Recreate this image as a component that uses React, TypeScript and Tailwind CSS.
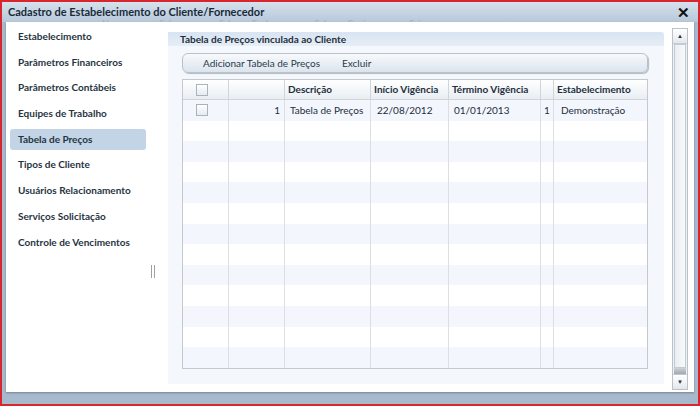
import { useState } from "react";

const NAV = [
  "Estabelecimento",
  "Parâmetros Financeiros",
  "Parâmetros Contábeis",
  "Equipes de Trabalho",
  "Tabela de Preços",
  "Tipos de Cliente",
  "Usuários Relacionamento",
  "Serviços Solicitação",
  "Controle de Vencimentos",
];

const GHOST = ["Novo", "Salvar", "Salvar e Fechar", "Salvar e Copiar", "Sair"];

const ROWS = 13;

const COLS = "grid grid-cols-[46px_56px_86px_78px_92px_13px_1fr]";

function Check() {
  return <span className="block w-[12px] h-[12px] border border-[#a9b3bd] bg-gradient-to-b from-white to-[#e6ebf0]" />;
}

export default function App() {
  const [active, setActive] = useState("Tabela de Preços");

  return (
    <div
      className="w-[700px] h-[406px] border-2 border-[#d8262e] bg-[#a7b9cd] flex flex-col overflow-hidden text-[#1d2f3d]"
      style={{ fontFamily: 'Lato, "Open Sans", sans-serif' }}
    >
      {/* title bar */}
      <div className="relative h-[20px] shrink-0 flex items-center pl-[6px] pr-[8px] bg-gradient-to-b from-[#d6e1ec] to-[#b7c8da]">
        <span className="text-[11px] font-bold text-[#1a2a38]">
          Cadastro de Estabelecimento do Cliente/Fornecedor
        </span>
        <span className="ml-auto text-[15px] font-bold leading-none text-[#111]">✕</span>
        <div className="absolute left-[100px] top-[17px] h-[3px] overflow-hidden flex gap-[36px] text-[9px] leading-[9px] text-[#8ea0b3] opacity-60">
          {GHOST.map((g) => <span key={g}>{g}</span>)}
        </div>
      </div>

      <div className="flex-1 flex px-[4px] pb-[12px]">
        <div className="relative flex-1 bg-white flex pt-[4px] shadow-[0_1px_2px_rgba(0,0,0,0.3)]">
          {/* left nav */}
          <div className="w-[140px] shrink-0 flex flex-col pl-[4px]">
            {NAV.map((n) => (
              <button
                key={n}
                onClick={() => setActive(n)}
                className={`h-[21px] mb-[4.7px] rounded-[3px] text-left pl-[8px] text-[10px] font-bold text-[#1f3442] ${
                  active === n ? "bg-[#c2d4e6]" : ""
                }`}
              >
                {n}
              </button>
            ))}
            <div className="self-end mr-[-9px] mt-[8px] w-[4px] h-[13px] border-x border-[#a0a0a0]" />
          </div>

          {/* main panel */}
          <div className="flex-1 flex pl-[22px] pt-[6px] pb-[8px] pr-[8px]">
            <div className="flex-1 flex flex-col bg-[#f4f7fb]">
              <div className="h-[14px] rounded-tr-[4px] bg-gradient-to-b from-[#d8e4f1] to-[#e6eef7] pl-[12px] flex items-center text-[10px] font-bold">
                Tabela de Preços vinculada ao Cliente
              </div>
              <div className="ml-[14px] mr-[16px] mt-[7px] h-[20px] rounded-[6px] border border-[#b8c2cc] bg-gradient-to-b from-[#f8fafc] to-[#dbe4ee] shadow-[1px_1px_1px_rgba(0,0,0,0.25)] flex items-center gap-[22px] pl-[20px] text-[10px] text-[#2a3a48]">
                <span>Adicionar Tabela de Preços</span>
                <span>Excluir</span>
              </div>
              <div className="ml-[14px] mr-[16px] mt-[6px] border border-[#c4c9cf] bg-white text-[10px]">
                <div className={`${COLS} h-[20px] bg-gradient-to-b from-white to-[#e9eef3] border-b border-[#d0d5da] font-bold`}>
                  <div className="border-r border-[#d0d5da] flex items-center pl-[13px]"><Check /></div>
                  <div className="border-r border-[#d0d5da]" />
                  <div className="border-r border-[#d0d5da] flex items-center pl-[3px]">Descrição</div>
                  <div className="border-r border-[#d0d5da] flex items-center pl-[3px]">Início Vigência</div>
                  <div className="border-r border-[#d0d5da] flex items-center pl-[3px]">Término Vigência</div>
                  <div className="border-r border-[#d0d5da]" />
                  <div className="flex items-center pl-[3px]">Estabelecimento</div>
                </div>
                {Array.from({ length: ROWS }).map((_, i) => (
                  <div
                    key={i}
                    className={`${COLS} h-[20.6px] ${i % 2 === 0 ? "bg-[#f3f6fc]" : "bg-white"}`}
                  >
                    <div className="border-r border-[#dcdfe2] flex items-center pl-[13px]">{i === 0 && <Check />}</div>
                    <div className="border-r border-[#dcdfe2] flex items-center justify-end pr-[4px]">{i === 0 && "1"}</div>
                    <div className="border-r border-[#dcdfe2] flex items-center pl-[5px]">{i === 0 && "Tabela de Preços"}</div>
                    <div className="border-r border-[#dcdfe2] flex items-center pl-[6px]">{i === 0 && "22/08/2012"}</div>
                    <div className="border-r border-[#dcdfe2] flex items-center pl-[5px]">{i === 0 && "01/01/2013"}</div>
                    <div className="border-r border-[#dcdfe2] flex items-center justify-center">{i === 0 && "1"}</div>
                    <div className="flex items-center pl-[7px]">{i === 0 && "Demonstração"}</div>
                  </div>
                ))}
              </div>
            </div>
          </div>

          {/* scrollbar */}
          <div className="w-[16px] shrink-0 mr-[6px] mb-[2px] mt-[2px] flex flex-col border border-[#b9c1c9] bg-[#eef2f6]">
            <div className="h-[15px] border-b border-[#c4cbd2] bg-gradient-to-b from-white to-[#e3e8ee] flex items-center justify-center text-[6px] leading-none">▲</div>
            <div className="flex-1 flex flex-col px-[1px]">
              <div className="flex-1 border border-[#c3cad2] bg-gradient-to-r from-[#e9eef4] to-[#f7f9fb]" />
              <div className="h-[6px] bg-gradient-to-b from-[#cfd3d8] to-[#9fa6ad]" />
            </div>
            <div className="h-[15px] border-t border-[#c4cbd2] bg-gradient-to-b from-white to-[#e3e8ee] flex items-center justify-center text-[6px] leading-none">▼</div>
          </div>
        </div>
      </div>
    </div>
  );
}
